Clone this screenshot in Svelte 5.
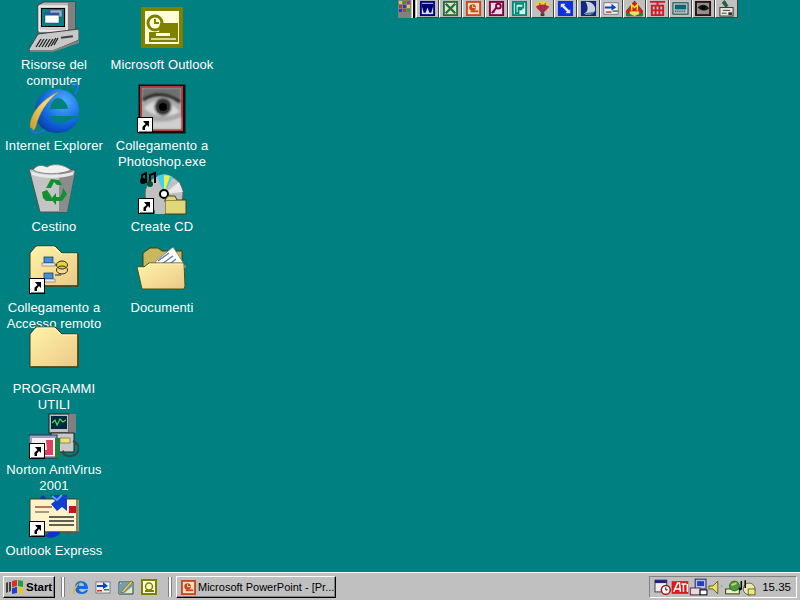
<script>
	const column_one = [
		{ id: 'computer', lines: ['Risorse del', 'computer'] },
		{ id: 'ie', lines: ['Internet Explorer'] },
		{ id: 'bin', lines: ['Cestino'] },
		{ id: 'access', lines: ['Collegamento a', 'Accesso remoto'] },
		{ id: 'folder', lines: ['PROGRAMMI', 'UTILI'] },
		{ id: 'norton', lines: ['Norton AntiVirus', '2001'] },
		{ id: 'express', lines: ['Outlook Express'] }
	]
	const column_two = [
		{ id: 'outlook', lines: ['Microsoft Outlook'] },
		{ id: 'photoshop', lines: ['Collegamento a', 'Photoshop.exe'] },
		{ id: 'cd', lines: ['Create CD'] },
		{ id: 'documents', lines: ['Documenti'] }
	]
	const office_buttons = ['word', 'excel', 'ppt', 'access', 'publisher', 'balloon', 'binder', 'moon', 'sync', 'house', 'red', 'keyboard', 'dark', 'tools']
</script>

{#snippet shortcut(x, y)}
	<g transform="translate({x} {y})">
		<rect x="0.5" y="0.5" width="15" height="15" fill="#fff" stroke="#000" />
		<rect x="2" y="14" width="13" height="1" fill="#808080" />
		<path d="M6 4h6v6l-2-2-2 2.5v2.5H5.500v-3.500l3-2.500z" fill="#000" />
	</g>
{/snippet}

{#snippet folder_shape(fill)}
	<path d="M1 10 7 3H26L33 10H49V43H1z" fill={fill} stroke="#3a3a10" />
	<path d="M2 11 8 4H25L32 11H48" fill="none" stroke="#fff8c8" />
	<path d="M49 11V43H2" fill="none" stroke="#484818" stroke-width="1.500" />
{/snippet}

{#snippet desktop_icon(id)}
	<svg class="icon" viewBox="0 0 50 56" width="50" height="56" aria-hidden="true">
		<defs>
			<linearGradient id="{id}-folder" x1="0" y1="0" x2="1" y2="1">
				<stop offset="0" stop-color="#fff4a8" />
				<stop offset="1" stop-color="#ecc888" />
			</linearGradient>
			<linearGradient id="{id}-swoosh" x1="0" y1="1" x2="1" y2="0">
				<stop offset="0" stop-color="#c09a30" />
				<stop offset="0.6" stop-color="#f0d878" />
				<stop offset="1" stop-color="#a8c8f0" />
			</linearGradient>
			<radialGradient id="{id}-blue" cx="0.65" cy="0.3" r="0.8">
				<stop offset="0" stop-color="#50b0ff" />
				<stop offset="0.6" stop-color="#1068e0" />
				<stop offset="1" stop-color="#0838a0" />
			</radialGradient>
			<filter id="{id}-soft"><feGaussianBlur stdDeviation="1.100" /></filter>
		</defs>
		{#if id === 'computer'}
			<path d="M9 5 15 2 46 2V30L38 33H9z" fill="#b8b8b8" stroke="#404040" />
			<path d="M39 3 46 2V30L39 32z" fill="#808080" />
			<path d="M10 6H38V31H10z" fill="#d0d0d0" stroke="#fff" />
			<rect x="12" y="8" width="24" height="19" fill="#000" />
			<rect x="13" y="9" width="22" height="17" fill="#008080" />
			<rect x="21" y="10" width="12" height="7" fill="#9ab0c8" stroke="#204060" stroke-width="0.500" />
			<rect x="16" y="13" width="14" height="10" fill="#fff" stroke="#204060" stroke-width="0.500" />
			<rect x="16" y="13" width="14" height="2.500" fill="#3050a0" />
			<path d="M0 49 9 34 50 29V40L24 51H0z" fill="#c8c8c8" stroke="#404040" />
			<path d="M1 50H24L50 40V43L24 52H1z" fill="#808080" />
			<path d="M7 47 12 39M10 47 15 39M13 47 18 39M16 47 21 39M19 47 24 39M22 46 27 38M25 45 29 38" stroke="#202020" stroke-width="1.300" />
			<rect x="32" y="36" width="12" height="2" fill="#404040" transform="rotate(-8 38 37)" />
		{:else if id === 'outlook'}
			<rect x="4" y="7" width="42" height="41" fill="#808000" />
			<rect x="8" y="11" width="34" height="33" fill="#fdfdd8" />
			<circle cx="18" cy="23" r="7" fill="#fdfdd8" stroke="#808000" stroke-width="3" />
			<path d="M18 19v4h4" fill="none" stroke="#808000" stroke-width="2" />
			<path d="M23 23H41V42H12V32H22z" fill="#808000" />
			<rect x="19" y="33" width="14" height="3" fill="#fdfdd8" />
			<rect x="14" y="38" width="25" height="2" fill="#d8d890" />
		{:else if id === 'ie'}
			<path fill-rule="evenodd" d="M28 8C40 8 50 17 50 29V35H21C22 40 26 42 31 42 36 42 40 40 44 37H50C46 47 38 52 29 52 15 52 6 43 6 30 6 17 16 8 28 8zM21 28H39C38 21 33 17 29 17 25 17 22 21 21 28z" fill="url(#ie-blue)" />
			<path d="M1 46C0 34 12 18 31 10 18 20 10 32 7 46 5 51 2 51 1 46z" fill="url(#ie-swoosh)" stroke="#806820" stroke-width="0.500" />
			<path d="M42 3C49 1 51 6 46 13" fill="none" stroke="#1878e8" stroke-width="2" />
			<path d="M2 47C3 53 10 53 16 49" fill="none" stroke="#2070d8" stroke-width="2" />
		{:else if id === 'photoshop'}
			<rect x="2" y="4" width="46" height="48" fill="#280808" stroke="#101010" />
			<rect x="3" y="5" width="43" height="45" fill="#b03838" />
			<rect x="5" y="7" width="39" height="41" fill="#a8a8a8" />
			<g filter="url(#photoshop-soft)">
				<path d="M5 7H44V22C32 11 16 12 5 20z" fill="#707070" />
				<path d="M6 19C16 12 30 11 43 21" fill="none" stroke="#181818" stroke-width="3" />
				<path d="M7 27C15 17 33 17 43 31 32 37 17 37 7 27z" fill="#d8d8d8" />
				<circle cx="26" cy="26" r="8.500" fill="#303030" />
				<path d="M5 38C18 42 32 42 44 36V48H5z" fill="#d0d0d0" />
			</g>
			<circle cx="26" cy="26" r="4" fill="#000" />
			{@render shortcut(0, 36)}
		{:else if id === 'bin'}
			<path d="M0 7 46 8 38 50H11z" fill="#c4c4c4" stroke="#505050" />
			<path d="M30 9H46L38 50H30z" fill="#8c8c8c" />
			<path d="M4 8C8 2 14 3 18 5 24 1 34 2 42 8 32 13 12 13 4 8z" fill="#f0f0f0" stroke="#707070" stroke-width="0.800" />
			<path d="M2 9C12 14 34 14 45 9L44 13C32 17 14 17 3 13z" fill="#e8e8e8" />
			<path d="M17 26 22 17 30 18 33 23 28 23 25 20 22 26z" fill="#109030" />
			<path d="M34 26 38 32 33 39H27V43L22 37 27 31V35H31L33 31z" fill="#109030" />
			<path d="M13 30 18 28 22 34 24 39H17L14 36z" fill="#109030" />
		{:else if id === 'cd'}
			<circle cx="27" cy="32" r="19" fill="#c0c0c0" stroke="#606060" />
			<path d="M27 32 20 14C27 11 31 12 36 15z" fill="#40d0f0" />
			<path d="M27 32 27 13 33 14z" fill="#f0f040" />
			<path d="M27 32 42 20 46 30z" fill="#e8e8e8" />
			<circle cx="27" cy="32" r="4" fill="#fff" stroke="#000" stroke-width="2" />
			<g transform="translate(0 4)">
				<path d="M5 15V9L9 7V17M13 18V9L18 7V17" fill="none" stroke="#000" stroke-width="2" />
				<circle cx="6" cy="15" r="3" fill="#000" />
				<circle cx="13" cy="18" r="3" fill="#005030" />
			</g>
			<rect x="28" y="38" width="21" height="14" fill="#e0d878" stroke="#404020" />
			<path d="M28 38 31 34H38L40 38" fill="#e0d878" stroke="#404020" />
			<rect x="18" y="40" width="10" height="12" fill="#c0c0c0" />
			{@render shortcut(1, 36)}
		{:else if id === 'access'}
			{@render folder_shape('url(#access-folder)')}
			<rect x="15" y="14" width="9" height="6" fill="#4090e0" stroke="#103060" stroke-width="0.700" />
			<rect x="13" y="20" width="13" height="3" fill="#e8e8e8" stroke="#505050" stroke-width="0.500" />
			<rect x="15" y="30" width="9" height="6" fill="#4090e0" stroke="#103060" stroke-width="0.700" />
			<rect x="13" y="36" width="13" height="3" fill="#e8e8e8" stroke="#505050" stroke-width="0.500" />
			<path d="M26 22h4M26 32h6" stroke="#303030" />
			<ellipse cx="33" cy="22" rx="5.500" ry="4" fill="#e8d040" stroke="#303010" />
			<ellipse cx="33" cy="27" rx="5.500" ry="4" fill="none" stroke="#303010" />
			{@render shortcut(0, 35)}
		{:else if id === 'documents'}
			<path d="M6 10 13 5H21L25 8H45V24H6z" fill="#c8b860" stroke="#404010" />
			<path d="M19 18 36 4 49 24 35 36H15z" fill="#fff" stroke="#707070" stroke-width="0.700" />
			<path d="M21 18 32 10M25 21 36 13M29 24 39 16" stroke="#6080b0" stroke-width="1.500" />
			<path d="M0 24H7L12 20 47 20 48 43 47 46H5z" fill="url(#documents-folder)" stroke="#505010" />
			<path d="M1 25H8L12 21H46" fill="none" stroke="#fff8d0" />
		{:else if id === 'folder'}
			{@render folder_shape('url(#folder-folder)')}
		{:else if id === 'norton'}
			<rect x="20" y="9" width="20" height="19" fill="#c0c0c0" stroke="#202020" />
			<rect x="22" y="11" width="16" height="13" fill="#002840" />
			<path d="M23 18 26 15 28 20 31 14 34 17 37 15" fill="none" stroke="#40e060" stroke-width="1.200" />
			<rect x="40" y="9" width="7" height="19" fill="#808080" />
			<rect x="22" y="28" width="23" height="19" fill="#c8c8c8" stroke="#202020" />
			<rect x="31" y="33" width="10" height="5" fill="#f0e070" stroke="#404040" stroke-width="0.500" />
			<path d="M44 36C53 40 51 50 41 51 34 51 33 47 35 46" fill="none" stroke="#404040" stroke-width="2" />
			<rect x="0" y="30" width="28" height="23" fill="#a0a0c0" stroke="#303040" />
			<rect x="3" y="33" width="23" height="18" fill="#f0f0f0" />
			<path d="M17 35H24V50H12V45H18z" fill="#e04060" />
			<rect x="26" y="33" width="5" height="20" fill="#208040" />
			{@render shortcut(0, 38)}
		{:else if id === 'express'}
			<path d="M14 9 10 13 18 13z" fill="#1030c0" />
			<rect x="1" y="13" width="49" height="33" fill="#fcf4c8" stroke="#404020" />
			<path d="M48 13V46H3" fill="none" stroke="#606040" stroke-width="1.500" />
			<rect x="6" y="20" width="17" height="2" fill="#c07060" />
			<rect x="6" y="25" width="14" height="2" fill="#a0a080" />
			<rect x="40" y="20" width="7" height="7" fill="#d01020" />
			<rect x="20" y="30" width="25" height="2" fill="#606050" />
			<rect x="20" y="34" width="25" height="2" fill="#606050" />
			<rect x="20" y="38" width="25" height="2" fill="#606050" />
			<path d="M21 9 38 9 38 25 33 21 28 25 22 18 26 15z" fill="#1040d0" />
			<path d="M23 10 28 14 33 9" fill="none" stroke="#60a0f0" stroke-width="2" />
			<path d="M16 50C24 55 32 48 31 46L20 46z" fill="#1030d0" />
			{@render shortcut(0, 35)}
		{/if}
	</svg>
{/snippet}

{#snippet office_icon(id)}
	<svg viewBox="0 0 18 18" width="17" height="17" aria-hidden="true">
		{#if id === 'word'}
			<rect x="1" y="1" width="16" height="16" fill="#000080" />
			<rect x="3" y="3" width="12" height="12" fill="#d8e0f0" />
			<path d="M3 4H15V6.500L13 13.500H11L9 8 7 13.500H5L3 6.500z" fill="#000080" />
		{:else if id === 'excel'}
			<rect x="1" y="1" width="16" height="16" fill="#2a6b38" />
			<rect x="3" y="3" width="12" height="12" fill="#d8e8d0" />
			<path d="M4 4 14 14M14 4 4 14" stroke="#2a6b38" stroke-width="2.500" />
		{:else if id === 'ppt'}
			<rect x="1" y="1" width="16" height="16" fill="#c84818" />
			<rect x="3" y="3" width="12" height="12" fill="#f8e0c8" />
			<circle cx="8" cy="8" r="3.500" fill="#c84818" />
			<rect x="6" y="11" width="8" height="2" fill="#c84818" />
			<path d="M8 5.500V8h3" fill="none" stroke="#f8e0c8" />
		{:else if id === 'access'}
			<rect x="1" y="1" width="16" height="16" fill="#800040" />
			<rect x="3" y="3" width="12" height="12" fill="#f0d8e0" />
			<circle cx="11" cy="6.500" r="2.500" fill="none" stroke="#800040" stroke-width="2" />
			<path d="M9 8 4 14M5 12l2 1" stroke="#800040" stroke-width="2" />
		{:else if id === 'publisher'}
			<rect x="1" y="1" width="16" height="16" fill="#008878" />
			<rect x="3" y="3" width="12" height="12" fill="#d8f0f0" />
			<path d="M5 4H13V8H8V14H5zM7 10H12" fill="none" stroke="#008878" stroke-width="1.800" />
		{:else if id === 'balloon'}
			<path d="M9 1C14 1 17 4 16 7 15 10 11 12 10 14H8C7 12 3 10 2 7 1 4 4 1 9 1z" fill="#f0d020" />
			<path d="M2 7C6 4 12 4 16 7 15 10 12 11 10 14H8C6 11 3 10 2 7z" fill="#d02030" />
			<path d="M6 3 8 14M12 3 10 14" stroke="#2050c0" />
			<rect x="7" y="14" width="4" height="3" fill="#603010" />
		{:else if id === 'binder'}
			<rect x="1" y="1" width="16" height="16" fill="#1030e0" />
			<path d="M4 4H9L7.500 5.500 13 11 14 9.500V14H9L10.500 12.500 5 7 4 8.500z" fill="#e0e8ff" />
		{:else if id === 'moon'}
			<rect x="1" y="1" width="16" height="16" fill="#102880" />
			<path d="M6 2C12 1 17 6 16 11 14 16 7 17 4 14 9 13 9 7 6 2z" fill="#c8d0d8" />
			<path d="M4 14C9 13 16 13 16 11 14 16 7 17 4 14z" fill="#508088" />
		{:else if id === 'sync'}
			<rect x="1" y="3" width="15" height="12" fill="#f0f0f0" stroke="#404060" stroke-width="0.600" />
			<path d="M2 7H9V4L14 8 9 11V9H2z" fill="#1040c0" />
			<rect x="10" y="11" width="6" height="1.500" fill="#208040" />
			<rect x="3" y="12" width="6" height="1.500" fill="#c03030" />
		{:else if id === 'house'}
			<path d="M9 1 18 12 17 17H1L0 12z" fill="#d02020" stroke="#401010" stroke-width="0.500" />
			<path d="M4 12H14V17H4z" fill="#f0e060" />
			<path d="M6 11V5L9 8 12 5V11" fill="none" stroke="#ffe020" stroke-width="1.600" />
			<path d="M0 13 9 17 18 13V17H0z" fill="#208040" />
		{:else if id === 'red'}
			<path d="M1 2H17M9 2V6M3 6H15V16H3zM3 16H15M7 6V16M11 6V16M3 11H15" fill="none" stroke="#d01828" stroke-width="2" />
		{:else if id === 'keyboard'}
			<rect x="1" y="3" width="16" height="12" fill="#c0c8c8" stroke="#103838" />
			<rect x="3" y="5" width="12" height="5" fill="#006878" />
			<path d="M3 12H15" stroke="#204848" stroke-width="2" stroke-dasharray="1 1" />
		{:else if id === 'dark'}
			<rect x="0" y="1" width="17" height="16" fill="#301010" />
			<rect x="2" y="3" width="13" height="12" fill="#909090" />
			<path d="M3 8C6 4 12 4 15 9 11 12 6 12 3 8z" fill="#181818" />
			<circle cx="9" cy="8" r="2" fill="#000" />
		{:else if id === 'tools'}
			<path d="M7 0 9 3 11 6 8 8 4 3z" fill="#206040" />
			<rect x="2" y="8" width="14" height="9" fill="#e8e8d8" stroke="#303030" />
			<path d="M5 11h8M4 14h5" stroke="#404040" />
			<rect x="11" y="13" width="4" height="3" fill="#303030" />
		{/if}
	</svg>
{/snippet}

<div class="screen">
	<main class="desktop">
		<div class="icons">
			{#each [column_one, column_two] as column}
				<div class="column">
					{#each column as item}
						<div class="shortcut">
							{@render desktop_icon(item.id)}
							<div class="label">
								{#each item.lines as line}
									<span>{line}</span>
								{/each}
							</div>
						</div>
					{/each}
				</div>
			{/each}
		</div>

		<div class="office-bar">
			<div class="office-menu">
				<svg viewBox="0 0 13 18" width="13" height="18" aria-hidden="true">
					<rect x="1" y="1" width="3" height="3" fill="#e0d020" />
					<rect x="5" y="1" width="3" height="3" fill="#20a040" />
					<rect x="9" y="1" width="3" height="3" fill="#d03030" />
					<rect x="1" y="5" width="3" height="3" fill="#d03030" />
					<rect x="5" y="5" width="3" height="3" fill="#2040c0" />
					<rect x="9" y="5" width="3" height="3" fill="#e0d020" />
					<rect x="1" y="9" width="3" height="3" fill="#2040c0" />
					<rect x="5" y="9" width="3" height="3" fill="#d03030" />
					<rect x="9" y="9" width="3" height="3" fill="#20a040" />
				</svg>
			</div>
			<div class="office-sep"></div>
			{#each office_buttons as button}
				<div class="office-button">{@render office_icon(button)}</div>
			{/each}
		</div>
	</main>

	<footer class="taskbar">
		<button class="start">
			<svg viewBox="0 0 18 16" width="18" height="16" aria-hidden="true">
				<path d="M0 4 2 3 2 13 0 14zM3 3 5 3V12L3 13z" fill="#404040" />
				<path d="M6 2 11 1V7L6 8z" fill="#d83020" />
				<path d="M12 1 17 2V8L12 7z" fill="#20a040" />
				<path d="M6 9 11 8V14L6 15z" fill="#2040d0" />
				<path d="M12 8 17 9V15L12 14z" fill="#e8c820" />
			</svg>
			<span>Start</span>
		</button>
		<div class="grip"></div>
		<div class="quick">
			<svg viewBox="0 0 16 16" width="16" height="16" aria-hidden="true">
				<path fill-rule="evenodd" d="M9 2C13 2 16 5 16 9V10H7C7 12 9 13 10 13 12 13 13 12 14 11H16C15 14 12 15 10 15 5 15 3 12 3 9 3 5 5 2 9 2zM7 7H12C12 5 11 4 9.500 4 8 4 7 5 7 7z" fill="#1468e0" />
				<path d="M1 15C0 10 5 4 11 2 6 5 3 10 2.500 15z" fill="#d8b850" />
			</svg>
			<svg viewBox="0 0 16 16" width="16" height="16" aria-hidden="true">
				<rect x="1" y="3" width="14" height="11" fill="#f0f0f0" stroke="#404060" stroke-width="0.600" />
				<path d="M2 6H8V3L13 7 8 10V8H2z" fill="#1040c0" />
				<rect x="9" y="10" width="5" height="1.500" fill="#208040" />
				<rect x="2" y="11" width="5" height="1.500" fill="#c03030" />
			</svg>
			<svg viewBox="0 0 16 16" width="16" height="16" aria-hidden="true">
				<path d="M1 3H15V15H1z" fill="#e8e8c8" stroke="#204048" />
				<path d="M1 15V6L5 3H13L15 5V7L5 15z" fill="#70a0b0" />
				<path d="M4 12 13 2 15 3 6 13 3 14z" fill="#f0d050" stroke="#604010" stroke-width="0.500" />
			</svg>
			<svg viewBox="0 0 16 16" width="16" height="16" aria-hidden="true">
				<rect x="0" y="0" width="16" height="16" fill="#808000" />
				<rect x="2" y="2" width="12" height="12" fill="#fdfdd8" />
				<circle cx="8" cy="7.500" r="3.500" fill="none" stroke="#808000" stroke-width="1.500" />
				<path d="M7 11H13V13H4V11z" fill="#808000" />
			</svg>
		</div>
		<div class="grip"></div>
		<button class="task">
			<svg viewBox="0 0 16 16" width="15" height="15" aria-hidden="true">
				<rect x="0" y="0" width="16" height="16" fill="#c84818" />
				<rect x="2" y="2" width="12" height="12" fill="#f8e0c8" />
				<circle cx="7" cy="7" r="3.500" fill="#c84818" />
				<rect x="5" y="10" width="8" height="2" fill="#c84818" />
				<path d="M7 4.500V7h2.500" fill="none" stroke="#f8e0c8" />
			</svg>
			<span>Microsoft PowerPoint - [Pr...</span>
		</button>
		<div class="tray">
			<svg viewBox="0 0 104 18" width="102" height="18" aria-hidden="true">
				<rect x="1" y="2" width="12" height="12" fill="#f0f0f0" stroke="#404040" />
				<rect x="1" y="2" width="12" height="3" fill="#202080" />
				<circle cx="12" cy="12" r="4.500" fill="#fff" stroke="#a01010" stroke-width="1.500" />
				<path d="M12 9.500V12h2" fill="none" stroke="#000" />
				<rect x="18" y="3" width="17" height="13" fill="#e01818" />
				<path d="M20 14 24 5H26L27 14M22 11H27M28 6H33M30 6V14M34 6V14" fill="none" stroke="#fff" stroke-width="1.500" />
				<rect x="42" y="1" width="11" height="10" fill="#c0c0e0" stroke="#202060" />
				<rect x="44" y="3" width="7" height="5" fill="#2040c0" />
				<rect x="37" y="10" width="10" height="7" fill="#e0e0e0" stroke="#602040" />
				<rect x="47" y="12" width="7" height="5" fill="#fff" stroke="#000" />
				<path d="M56 8 60 8 65 3V16L60 11H56z" fill="#f0e060" stroke="#404020" stroke-width="0.800" />
				<path d="M68 8h2" stroke="#909090" />
				<rect x="73" y="11" width="14" height="5" fill="#f0f0c0" stroke="#304010" />
				<circle cx="82" cy="8" r="5" fill="#40a040" stroke="#204020" stroke-width="0.700" />
				<path d="M79 7l5-2" stroke="#e0d040" stroke-width="2" />
				<circle cx="97" cy="11" r="6" fill="#e8e8b0" stroke="#505020" stroke-width="0.800" />
				<path d="M89 3V11M93 2V10" stroke="#000" stroke-width="1.500" />
				<circle cx="88" cy="11" r="1.500" fill="#000" />
				<rect x="96" y="11" width="7" height="6" fill="#f0e878" stroke="#404010" stroke-width="0.700" />
			</svg>
			<time>15.35</time>
		</div>
	</footer>
</div>

<style>
	:global(body) {
		margin: 0;
		overflow: hidden;
	}

	.screen {
		display: flex;
		flex-direction: column;
		width: 800px;
		height: 600px;
		background: #008080;
		font-family: "Liberation Sans", Arial, sans-serif;
		font-size: 12px;
	}

	.desktop {
		position: relative;
		flex: 1;
		min-height: 0;
	}

	.icons {
		display: flex;
	}

	.column {
		display: grid;
		grid-auto-rows: 81px;
		width: 108px;
	}

	.shortcut {
		display: flex;
		flex-direction: column;
		align-items: center;
	}

	.icon {
		display: block;
		flex: none;
	}

	.label {
		display: flex;
		flex-direction: column;
		align-items: center;
		margin-top: 1px;
		color: #fff;
		font-size: 13px;
		letter-spacing: 0.1px;
		line-height: 16px;
		white-space: nowrap;
	}

	.office-bar {
		position: absolute;
		top: 0;
		left: 398px;
		display: flex;
		align-items: flex-start;
		height: 18px;
		background: #c0c0c0;
	}

	.office-menu {
		width: 13px;
		height: 18px;
		background: #808080;
		line-height: 0;
	}

	.office-sep {
		width: 2px;
		height: 18px;
		margin: 0 1px;
		border-left: 1px solid #fff;
		background: #000;
		background-clip: content-box;
	}

	.office-button {
		display: flex;
		align-items: flex-start;
		justify-content: center;
		box-sizing: border-box;
		width: 23px;
		height: 18px;
		border-right: 1px solid #404040;
		border-bottom: 1px solid #404040;
		border-left: 1px solid #fff;
		background: #c0c0c0;
	}

	.taskbar {
		display: flex;
		align-items: center;
		box-sizing: border-box;
		height: 28px;
		padding: 2px 3px 1px;
		border-top: 1px solid #fff;
		background: #c0c0c0;
		color: #000;
	}

	button {
		display: flex;
		align-items: center;
		justify-content: flex-start;
		box-sizing: border-box;
		height: 22px;
		margin: 0;
		padding: 0 2px;
		border: 1px solid;
		border-color: #fff #000 #000 #fff;
		border-radius: 0;
		box-shadow: inset -1px -1px 0 #808080;
		background: #c0c0c0;
		font: inherit;
		color: inherit;
	}

	.start {
		gap: 2px;
		flex: none;
		width: 52px;
		font-size: 11.500px;
		font-weight: 700;
	}

	.grip {
		flex: none;
		box-sizing: border-box;
		width: 4px;
		height: 20px;
		margin-left: 6px;
		border-right: 1px solid #808080;
		border-left: 1px solid #808080;
		background: #fff;
	}

	.quick {
		display: flex;
		gap: 7px;
		margin: 0 5px 0 7px;
	}

	.quick svg,
	button svg,
	.tray svg {
		display: block;
		flex: none;
	}

	.task {
		gap: 2px;
		flex: none;
		width: 160px;
		margin-left: 4px;
		padding-left: 4px;
		font-size: 11px;
		white-space: nowrap;
		overflow: hidden;
	}

	.tray {
		display: flex;
		align-items: center;
		justify-content: space-between;
		box-sizing: border-box;
		width: 148px;
		height: 22px;
		margin-left: auto;
		padding: 0 5px 0 4px;
		border: 1px solid;
		border-color: #808080 #fff #fff #808080;
		font-size: 11.500px;
	}
</style>
